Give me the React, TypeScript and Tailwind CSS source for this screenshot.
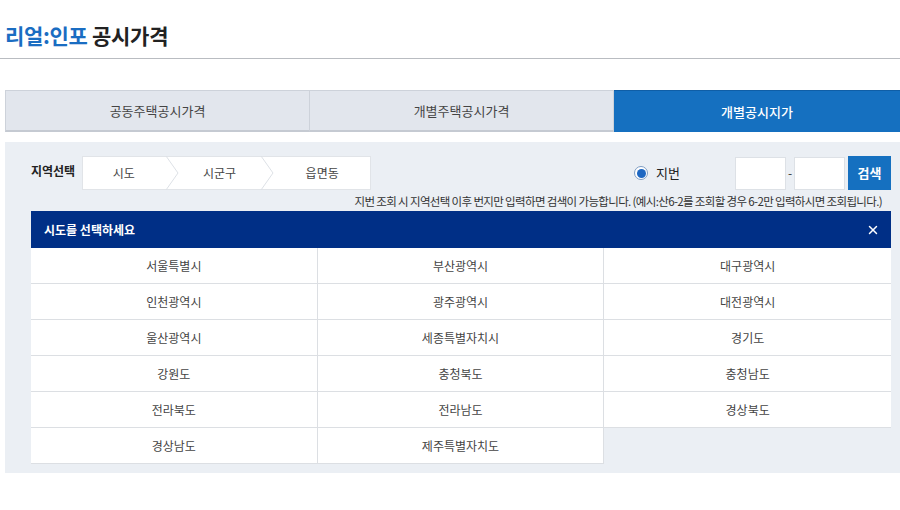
import { X } from 'lucide-react';

const tabs = ['공동주택공시가격', '개별주택공시가격', '개별공시지가'];
const steps = ['시도', '시군구', '읍면동'];
const regions = [
  '서울특별시', '부산광역시', '대구광역시',
  '인천광역시', '광주광역시', '대전광역시',
  '울산광역시', '세종특별자치시', '경기도',
  '강원도', '충청북도', '충청남도',
  '전라북도', '전라남도', '경상북도',
  '경상남도', '제주특별자치도',
];

function Chevron() {
  return (
    <svg width="14" height="34" viewBox="0 0 14 34" className="shrink-0">
      <path d="M1 0 L13 17 L1 34" fill="none" stroke="#dde1e6" strokeWidth="1" />
    </svg>
  );
}

export default function App() {
  return (
    <div
      className="w-[900px] h-[510px] bg-white text-[#333] overflow-hidden"
      style={{ fontFamily: '"Noto Sans CJK KR", "Noto Sans", sans-serif' }}
    >
      {/* Page title */}
      <div className="pl-[5px] pt-[20px] h-[59px] border-b border-[#b9bcc1]">
        <h1 className="text-[21px] font-bold leading-[30px] tracking-[-0.3px]">
          <span className="text-[#1a6dc2]">리얼:인포</span>{' '}
          <span className="text-[#222]">공시가격</span>
        </h1>
      </div>

      {/* Tabs */}
      <div className="mt-[31px] ml-[5px] flex h-[42px]">
        {tabs.map((t, i) =>
          i === 2 ? (
            <div key={t} className="flex-1 flex items-center justify-center bg-[#1570c0] text-white text-[13px] font-medium border-t border-[#0f5ea6]">
              {t}
            </div>
          ) : (
            <div
              key={t}
              className="w-[305px] flex items-center justify-center bg-[#e2e6ed] text-[#444] text-[13px] border border-[#cdd2da] border-b-2 border-b-[#c5cad2] -ml-px first:ml-0"
            >
              {t}
            </div>
          )
        )}
      </div>

      {/* Search panel */}
      <div className="mt-[10px] ml-[5px] bg-[#ebeff4] pl-[26px] pr-[9px] pt-[14px] pb-[9px]">
        <div className="flex items-center h-[34px]">
          <span className="w-[51px] text-[12px] font-bold text-[#222] -mt-[5px]">지역선택</span>
          <div className="flex items-center h-[34px] w-[289px] bg-white border border-[#e1e4e8]">
            {steps.map((s, i) => (
              <div key={s} className="flex items-center h-full flex-1">
                <span className="flex-1 text-center text-[12px] text-[#444]">{s}</span>
                {i < steps.length - 1 && <Chevron />}
              </div>
            ))}
          </div>
          <div className="ml-auto flex items-center">
            <span className="w-[14px] h-[14px] rounded-full border border-[#7f9ec4] bg-white flex items-center justify-center">
              <span className="w-[9px] h-[9px] rounded-full bg-[#1d67c2]" />
            </span>
            <span className="ml-[8px] text-[13px] text-[#222]">지번</span>
            <input className="ml-[55px] w-[51px] h-[33px] bg-white border border-[#dde1e6] outline-none" />
            <span className="w-[8px] text-center text-[12px] text-[#333]">-</span>
            <input className="w-[51px] h-[33px] bg-white border border-[#dde1e6] outline-none" />
            <button className="ml-[3px] w-[43px] h-[34px] bg-[#1570c0] text-white text-[13px] font-bold">검색</button>
          </div>
        </div>

        <p className="mt-[3px] text-right pr-[9px] text-[11.5px] leading-[16px] text-[#333] tracking-[-0.65px]">
          지번 조회 시 지역선택 이후 번지만 입력하면 검색이 가능합니다. (예시:산6-2를 조회할 경우 6-2만 입력하시면 조회됩니다.)
        </p>

        {/* Region picker */}
        <div className="mt-[2px]">
          <div className="flex items-center justify-between h-[37px] bg-[#002f86] pl-[13px] pr-[11px]">
            <span className="text-white text-[12px] font-bold">시도를 선택하세요</span>
            <X className="w-[14px] h-[14px] text-white" strokeWidth={2.5} />
          </div>
          <div className="grid grid-cols-3">
            {regions.map((r, i) => (
              <div
                key={r}
                className={`h-[36px] flex items-center justify-center bg-white text-[12px] text-[#444] border-b border-[#dcdfe3] ${i % 3 !== 2 ? 'border-r' : ''}`}
              >
                {r}
              </div>
            ))}
          </div>
        </div>
      </div>
    </div>
  );
}
